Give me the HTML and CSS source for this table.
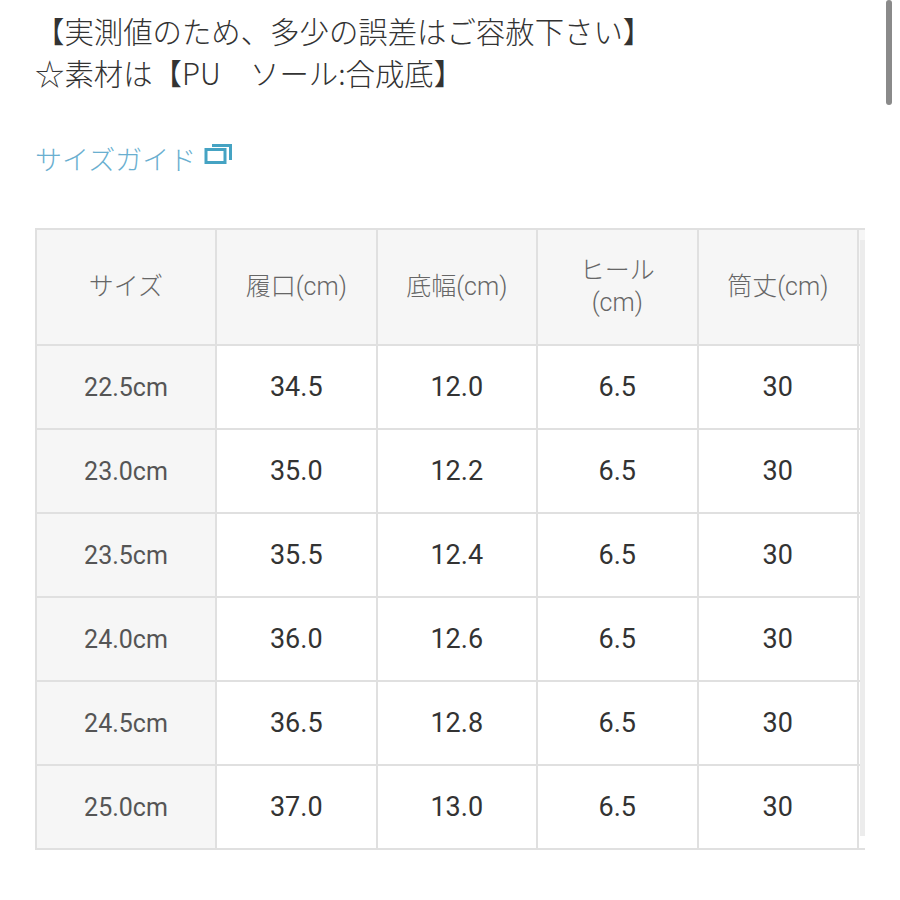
FILE: index.html
```html
<!DOCTYPE html>
<html lang="ja">
<head>
<meta charset="utf-8">
<title>サイズガイド</title>
<link rel="stylesheet" href="styles.css">
</head>
<body>
<div class="page">
  <p class="note">【実測値のため、多少の誤差はご容赦下さい】<br>☆素材は【PU　ソール:合成底】</p>
  <a class="guide" href="#">サイズガイド<svg class="ext" width="30" height="24" viewBox="0 0 30 24"><rect x="2" y="7.5" width="19" height="13" fill="none" stroke="#45a3c3" stroke-width="3"/><path d="M8 3.5 H26.5 V18" fill="none" stroke="#45a3c3" stroke-width="3"/></svg></a>
  <div class="table-wrap">
    <table class="sizes">
      <colgroup>
        <col class="c1"><col class="c"><col class="c"><col class="c"><col class="c"><col class="c">
      </colgroup>
      <thead>
        <tr><th>サイズ</th><th>履口(cm)</th><th>底幅(cm)</th><th>ヒール<br>(cm)</th><th>筒丈(cm)</th><th></th></tr>
      </thead>
      <tbody>
        <tr><th>22.5cm</th><td>34.5</td><td>12.0</td><td>6.5</td><td>30</td><td></td></tr>
        <tr><th>23.0cm</th><td>35.0</td><td>12.2</td><td>6.5</td><td>30</td><td></td></tr>
        <tr><th>23.5cm</th><td>35.5</td><td>12.4</td><td>6.5</td><td>30</td><td></td></tr>
        <tr><th>24.0cm</th><td>36.0</td><td>12.6</td><td>6.5</td><td>30</td><td></td></tr>
        <tr><th>24.5cm</th><td>36.5</td><td>12.8</td><td>6.5</td><td>30</td><td></td></tr>
        <tr><th>25.0cm</th><td>37.0</td><td>13.0</td><td>6.5</td><td>30</td><td></td></tr>
      </tbody>
    </table>
    <div class="edge-shadow"></div>
  </div>
</div>
<div class="scrollbar"></div>
</body>
</html>
```

FILE: styles.css
```css
html, body {
  margin: 0;
  padding: 0;
  background: #ffffff;
}
body {
  font-family: Roboto, "Noto Sans CJK JP", sans-serif;
  color: #333333;
}
.page {
  padding: 9px 0 0 35px;
}
.note {
  margin: 0;
  font-family: "Noto Sans CJK JP", sans-serif;
  font-weight: 300;
  font-size: 29.4px;
  line-height: 42px;
  color: #333333;
}
.guide {
  display: flex;
  align-items: center;
  gap: 8px;
  margin-top: 45px;
  height: 40px;
  font-family: "Noto Sans CJK JP", sans-serif;
  font-weight: 300;
  font-size: 27px;
  color: #6aafd0;
  text-decoration: none;
  width: max-content;
}
.ext {
  display: block;
  margin-top: -8px;
}
.table-wrap {
  position: relative;
  margin-top: 50px;
  width: 830px;
  overflow: hidden;
}
.sizes {
  border-collapse: collapse;
  table-layout: fixed;
  width: 982px;
}
.c1 { width: 180px; }
.c { width: 160.5px; }
.sizes th, .sizes td {
  border: 2px solid #e0e0e0;
  text-align: center;
  vertical-align: middle;
  padding: 0;
}
.sizes thead th {
  height: 114px;
  background: #f6f6f6;
  font-weight: 300;
  font-size: 25px;
  line-height: 32px;
  color: #666666;
  font-family: Roboto, "Noto Sans CJK JP", sans-serif;
}
.sizes tbody th {
  height: 82px;
  background: #f6f6f6;
  font-weight: normal;
  font-size: 25px;
  color: #555555;
}
.sizes tbody td {
  height: 82px;
  font-size: 27px;
  color: #333333;
  background: #ffffff;
}
.edge-shadow {
  position: absolute;
  right: 0;
  top: 12px;
  bottom: 14px;
  width: 5px;
  background: #ececec;
}
.scrollbar {
  position: absolute;
  left: 886px;
  top: 0;
  width: 6px;
  height: 105px;
  border-radius: 3px;
  background: #8a8a8a;
}
```
